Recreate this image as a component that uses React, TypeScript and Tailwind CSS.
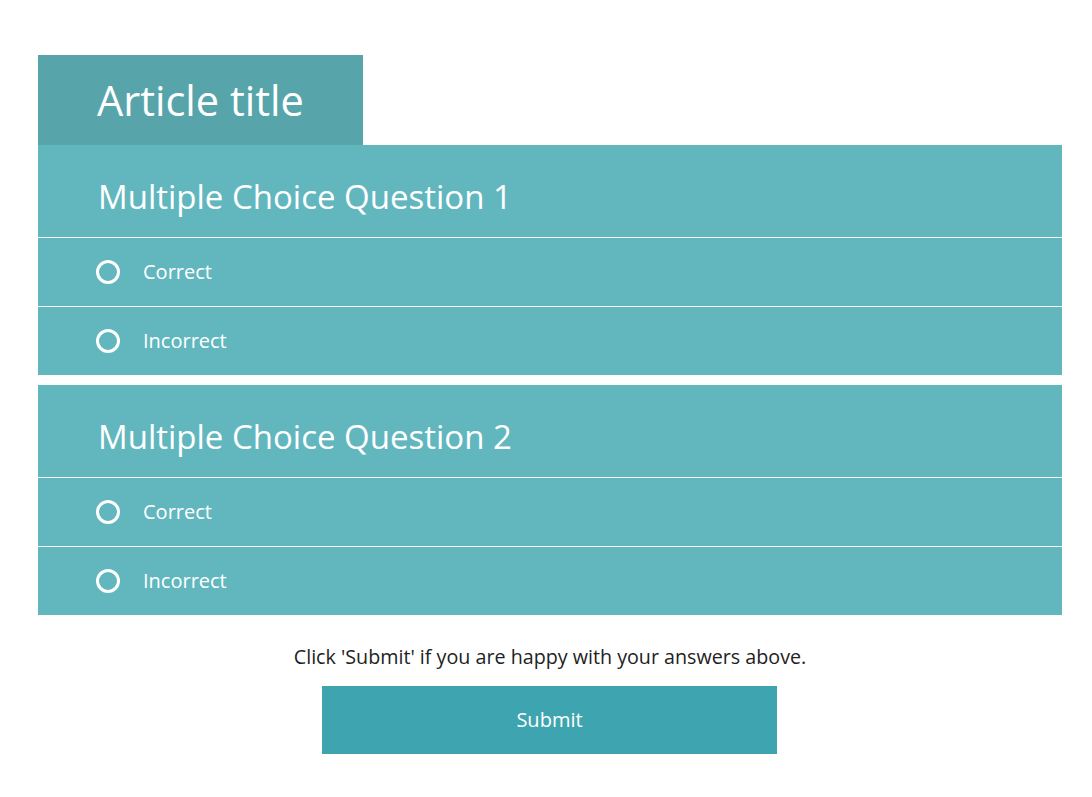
import React from 'react';

const QUESTIONS = [
  { title: 'Multiple Choice Question 1', options: ['Correct', 'Incorrect'] },
  { title: 'Multiple Choice Question 2', options: ['Correct', 'Incorrect'] },
];

const Radio = () => (
  <span className="w-[24px] h-[24px] rounded-full border-[3px] border-white shrink-0" />
);

export default function App() {
  return (
    <div className="min-h-screen bg-white font-['Open_Sans',sans-serif] pt-[55px] px-[38px] pb-[43px]">
      <div className="w-[1024px]">
        <div className="w-[325px] h-[90px] bg-[#57a5aa] flex items-center pl-[59px]">
          <h1 className="text-[41.5px] text-white leading-none pt-[2px]">Article title</h1>
        </div>

        <div className="flex flex-col gap-[10px]">
          {QUESTIONS.map((q) => (
            <div key={q.title} className="bg-[#62b7bf] text-white">
              <div className="h-[93px] flex items-center pl-[60px] border-b border-white">
                <h2 className="text-[33px] leading-none pt-[10px]">{q.title}</h2>
              </div>
              {q.options.map((opt, i) => (
                <label
                  key={opt}
                  className={`flex items-center gap-[23px] pl-[58px] cursor-pointer ${
                    i === 0 ? 'h-[69px] border-b border-white' : 'h-[68px]'
                  }`}
                >
                  <Radio />
                  <span className="text-[20px] pb-[1px]">{opt}</span>
                </label>
              ))}
            </div>
          ))}
        </div>

        <div className="flex flex-col items-center pt-[29px]">
          <p className="text-[19.7px] text-[#222] leading-[26px]">
            Click 'Submit' if you are happy with your answers above.
          </p>
          <button className="mt-[16px] ml-[-1px] w-[455px] h-[68px] bg-[#3ea5b0] text-white text-[20px]">
            Submit
          </button>
        </div>
      </div>
    </div>
  );
}
